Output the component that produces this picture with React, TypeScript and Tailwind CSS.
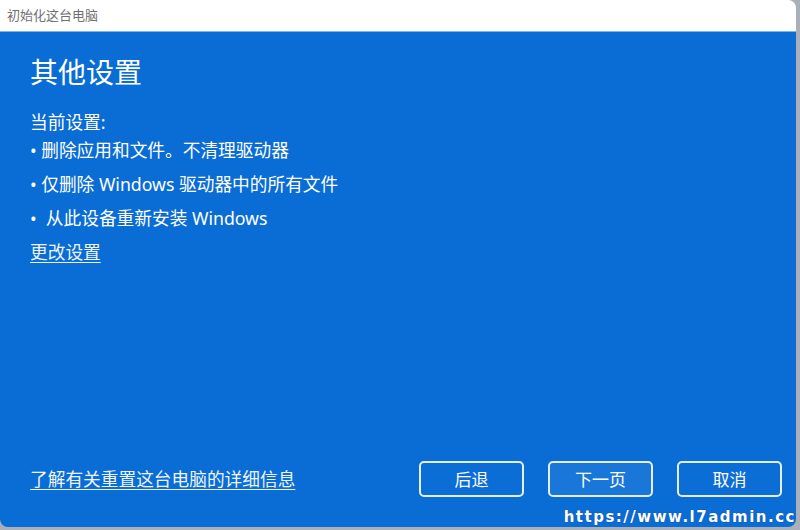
import React from "react";

const font = {
  fontFamily: '"Noto Sans", "Noto Sans CJK SC", sans-serif',
};

function DialogButton({ label, focused }: { label: string; focused?: boolean }) {
  return (
    <button
      className={
        "w-[105px] h-[36px] rounded-[5px] border-2 border-[#e6eefa] text-[17px] text-white leading-none " +
        (focused ? "bg-[#1877d9]" : "bg-[#0b6dd6]")
      }
    >
      {label}
    </button>
  );
}

export default function App() {
  // 현재 설정 목록
  const items = [
    "• 删除应用和文件。不清理驱动器",
    "• 仅删除 Windows 驱动器中的所有文件",
    "•  从此设备重新安装 Windows",
  ];

  return (
    <div className="relative w-[800px] h-[530px] bg-[#a9b0b8] overflow-hidden" style={font}>
      <div className="flex flex-col w-[796px] h-[527px] rounded-r-[8px] rounded-bl-[8px] overflow-hidden">
        {/* 타이틀 바 */}
        <div className="h-[32px] bg-white flex items-center px-[7px] border-b border-[#7fb2ea]">
          <span className="text-[13px] text-[#707070]">初始化这台电脑</span>
        </div>

        {/* 본문 */}
        <div className="flex-1 flex flex-col bg-[#0a6cd5] text-white pl-[30px] pr-[14px] pt-[22px] pb-[30px]">
          <div className="text-[28px] leading-[36px]">其他设置</div>
          <div className="mt-[21px] text-[17.7px] leading-[22px]">当前设置:</div>
          <div className="flex flex-col text-[17.7px]">
            {items.map((item) => (
              <div key={item} className="leading-[34px] whitespace-pre">
                {item}
              </div>
            ))}
            <a className="leading-[34px] underline underline-offset-[3px] text-[#eef4fc]">更改设置</a>
          </div>

          <div className="flex-1" />

          <div className="flex items-center">
            <a className="flex-1 text-[17.7px] underline underline-offset-[3px] text-[#eef4fc]">
              了解有关重置这台电脑的详细信息
            </a>
            <div className="flex gap-[24px]">
              <DialogButton label="后退" />
              <DialogButton label="下一页" focused />
              <DialogButton label="取消" />
            </div>
          </div>
        </div>
      </div>

      {/* 워터마크 */}
      <div
        className="absolute right-[4px] bottom-[5px] text-[15px] font-bold text-white tracking-[1.5px] leading-none"
        style={{ fontFamily: '"DejaVu Sans", sans-serif', textShadow: "0 0 1px #1a3f7a" }}
      >
        https://www.l7admin.cc
      </div>
    </div>
  );
}
